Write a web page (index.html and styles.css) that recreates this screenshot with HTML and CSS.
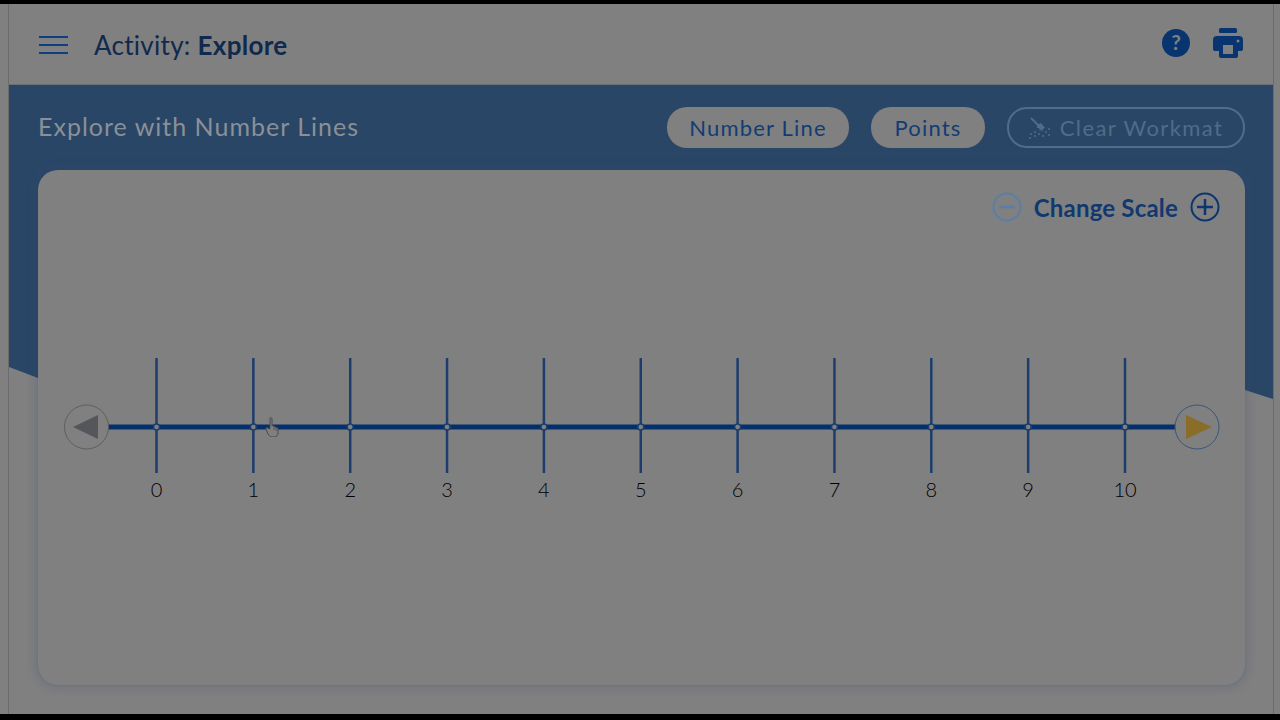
FILE: index.html
```html
<!DOCTYPE html>
<html lang="en">

<head>
  <meta charset="UTF-8">
  <title>Activity: Explore</title>
  <link rel="stylesheet" href="styles.css">
</head>

<body>
  <div class="app">
    <header class="topbar">
      <div class="menu-icon"><span></span><span></span><span></span></div>
      <div class="activity-title">Activity: <strong>Explore</strong></div>
      <div class="top-icons">
        <svg class="help-icon" viewBox="0 0 30 30" width="30" height="30">
          <circle cx="15" cy="15" r="14" fill="#08346f" />
          <text x="15" y="22" text-anchor="middle" class="help-mark">?</text>
        </svg>
        <svg class="print-icon" viewBox="0 0 32 30" width="32" height="30">
          <rect x="7" y="0" width="18" height="5" rx="1.5" fill="#08346f" />
          <path d="M5 8h22a4 4 0 0 1 4 4v9a2 2 0 0 1-2 2h-3v5a2 2 0 0 1-2 2H9a2 2 0 0 1-2-2v-5H3a2 2 0 0 1-2-2v-9a4 4 0 0 1 4-4z" fill="#08346f" />
          <rect x="11" y="17" width="10" height="9" fill="#808080" />
          <circle cx="26" cy="13" r="1.5" fill="#808080" />
        </svg>
      </div>
    </header>

    <main class="workspace">
      <div class="blue-back"></div>
      <div class="toolbar">
        <h1 class="panel-title">Explore with Number Lines</h1>
        <button class="pill pill-line">Number Line</button>
        <button class="pill pill-points">Points</button>
        <button class="pill pill-off">
          <svg viewBox="0 0 22 22" width="22" height="22">
            <path d="M2 1l8 8" stroke="#4f6c8a" stroke-width="2" />
            <path d="M8 8l4-2 4 5-2 1-1 3-1-3-1 2-1-3-2 0z" fill="#4f6c8a" />
            <g fill="#4f6c8a">
              <circle cx="2" cy="17" r="1" /><circle cx="6" cy="15" r="1" /><circle cx="6" cy="19" r="1" />
              <circle cx="10" cy="17" r="1" /><circle cx="14" cy="19" r="1" /><circle cx="17" cy="15" r="1" />
              <circle cx="20" cy="12" r="1" /><circle cx="20" cy="18" r="1" /><circle cx="1" cy="21" r="1" />
            </g>
          </svg>
          Clear Workmat
        </button>
      </div>

      <section class="card">
        <div class="scale-row">
          <svg viewBox="0 0 30 30" width="30" height="30">
            <circle cx="15" cy="15" r="13.5" fill="none" stroke="#5a7ea5" stroke-width="2" />
            <path d="M7 15h16" stroke="#5a7ea5" stroke-width="2.5" />
          </svg>
          <span class="scale-label">Change Scale</span>
          <svg viewBox="0 0 30 30" width="30" height="30">
            <circle cx="15" cy="15" r="13.5" fill="none" stroke="#0b3670" stroke-width="2" />
            <path d="M7 15h16M15 7v16" stroke="#0b3670" stroke-width="2.5" />
          </svg>
        </div>

        <svg class="number-line" viewBox="38 345 1207 165" width="1207" height="165" id="line">
          <line x1="108" y1="427" x2="1176" y2="427" class="axis" />
          <circle cx="86.5" cy="427" r="22" class="end-left" />
          <path d="M73 427L98 415V439Z" fill="#55565c" />
          <circle cx="1197" cy="427" r="22" class="end-right" />
          <path d="M1186 415L1212 427L1186 439Z" fill="#8a6d28" />
        </svg>
      </section>
    </main>

    <svg class="hand" viewBox="0 0 14 20" width="14" height="20">
      <path d="M5 1c1-1 2 0 2 1v7c1-1 2 0 2 1 1-1 2 0 2 1 1-1 2 0 2 1v4c0 2-1.500 4-4 4H7c-2 0-3-2-4-3L1 12c-.5-1 .5-1.500 1.500-1L5 12Z" fill="#808080" stroke="#4a4a4a" stroke-width="1" />
      <path d="M9 10v3M11 11v3" stroke="#4a4a4a" stroke-width="0.8" />
    </svg>
  </div>

  <script>
    // ticks and labels
    const svg = document.getElementById('line');
    const ns = 'http://www.w3.org/2000/svg';
    for (let i = 0; i <= 10; i++) {
      const x = 156.5 + i * 96.85;
      const tick = document.createElementNS(ns, 'line');
      tick.setAttribute('x1', x);
      tick.setAttribute('x2', x);
      tick.setAttribute('y1', 358);
      tick.setAttribute('y2', 473);
      tick.setAttribute('class', 'tick');
      svg.appendChild(tick);

      const dot = document.createElementNS(ns, 'circle');
      dot.setAttribute('cx', x);
      dot.setAttribute('cy', 427);
      dot.setAttribute('r', 3);
      dot.setAttribute('class', 'tick-dot');
      svg.appendChild(dot);

      const label = document.createElementNS(ns, 'text');
      label.setAttribute('x', x);
      label.setAttribute('y', 497);
      label.setAttribute('class', 'tick-label');
      label.textContent = i;
      svg.appendChild(label);
    }
  </script>
</body>

</html>
```

FILE: styles.css
```css
* {
  margin: 0;
  padding: 0;
  box-sizing: border-box;
}

body {
  background: #000;
  font-family: 'Lato', sans-serif;
  overflow: hidden;
}

.app {
  position: relative;
  height: 710px;
  margin-top: 4px;
  padding: 0 6px 0 8px;
  background: #808080;
}

.topbar {
  display: flex;
  align-items: center;
  height: 81px;
  padding: 0 0 0 30px;
  border-left: 1px solid #6b6b6b;
  border-right: 1px solid #6b6b6b;
  border-bottom: 1px solid #6a6f76;
}

.menu-icon {
  display: flex;
  flex-direction: column;
  gap: 6px;
  width: 29px;
  margin: 2px 26px 0 0;
}

.menu-icon span {
  height: 2px;
  background: #0d3f80;
}

.activity-title {
  margin-top: 2px;
  font-size: 26px;
  letter-spacing: 0.28px;
  color: #10294d;
}

.activity-title strong {
  font-weight: 700;
}

.top-icons {
  display: flex;
  align-items: center;
  gap: 21px;
  margin: -2px 29px 0 auto;
}

.help-mark {
  font: 700 21px 'Lato', sans-serif;
  fill: #808080;
}

.workspace {
  position: relative;
  height: 629px;
  padding: 22px 28px 0 29px;
  border-left: 1px solid #6b6b6b;
  border-right: 1px solid #6b6b6b;
}

.blue-back {
  position: absolute;
  inset: 0;
  background: #2a4666;
  clip-path: polygon(0 0, 100% 0, 100% 314px, calc(100% - 28px) 305px, 29px 293px, 0 282px);
}

.toolbar {
  position: relative;
  display: flex;
  align-items: center;
  gap: 22px;
  height: 41px;
}

.panel-title {
  margin: -3px auto 0 0;
  font-size: 25px;
  font-weight: 400;
  color: #8b9096;
  letter-spacing: 1px;
}

.pill {
  display: flex;
  align-items: center;
  justify-content: center;
  gap: 9px;
  height: 41px;
  border: 0;
  border-radius: 20px;
  background: #808080;
  color: #113d75;
  font: 400 22px 'Lato', sans-serif;
  letter-spacing: 1.2px;
}

.pill-line {
  width: 182px;
}

.pill-points {
  width: 114px;
}

.pill-off {
  width: 238px;
  border: 2px solid #4f6c8a;
  background: none;
  color: #4f6c8a;
  letter-spacing: 1.4px;
}

.card {
  position: relative;
  height: 515px;
  margin-top: 22px;
  padding-top: 22px;
  border-radius: 20px;
  background: #808080;
  box-shadow: 0 0 2px rgba(42, 70, 102, 0.3), 0 0 6px 6px rgba(60, 80, 120, 0.14);
}

.scale-row {
  display: flex;
  align-items: center;
  justify-content: flex-end;
  gap: 12px;
  height: 30px;
  padding-right: 25px;
}

.scale-label {
  font-size: 24px;
  font-weight: 700;
  letter-spacing: 0.2px;
  color: #11386f;
}

.number-line {
  display: block;
  margin-top: 123px;
}

.axis {
  stroke: #03306c;
  stroke-width: 5;
}

.tick {
  stroke: #1d3e6c;
  stroke-width: 2.5;
}

.tick-dot {
  fill: #808080;
  stroke: #1d3e6c;
  stroke-width: 1.5;
}

.tick-label {
  font: 300 20px 'Lato', sans-serif;
  fill: #000;
  text-anchor: middle;
}

.end-left {
  fill: #808080;
  stroke: #5f5f5f;
  stroke-width: 1;
}

.end-right {
  fill: #808080;
  stroke: #3a5578;
  stroke-width: 1;
}

.hand {
  position: absolute;
  left: 265px;
  top: 413px;
}
```
